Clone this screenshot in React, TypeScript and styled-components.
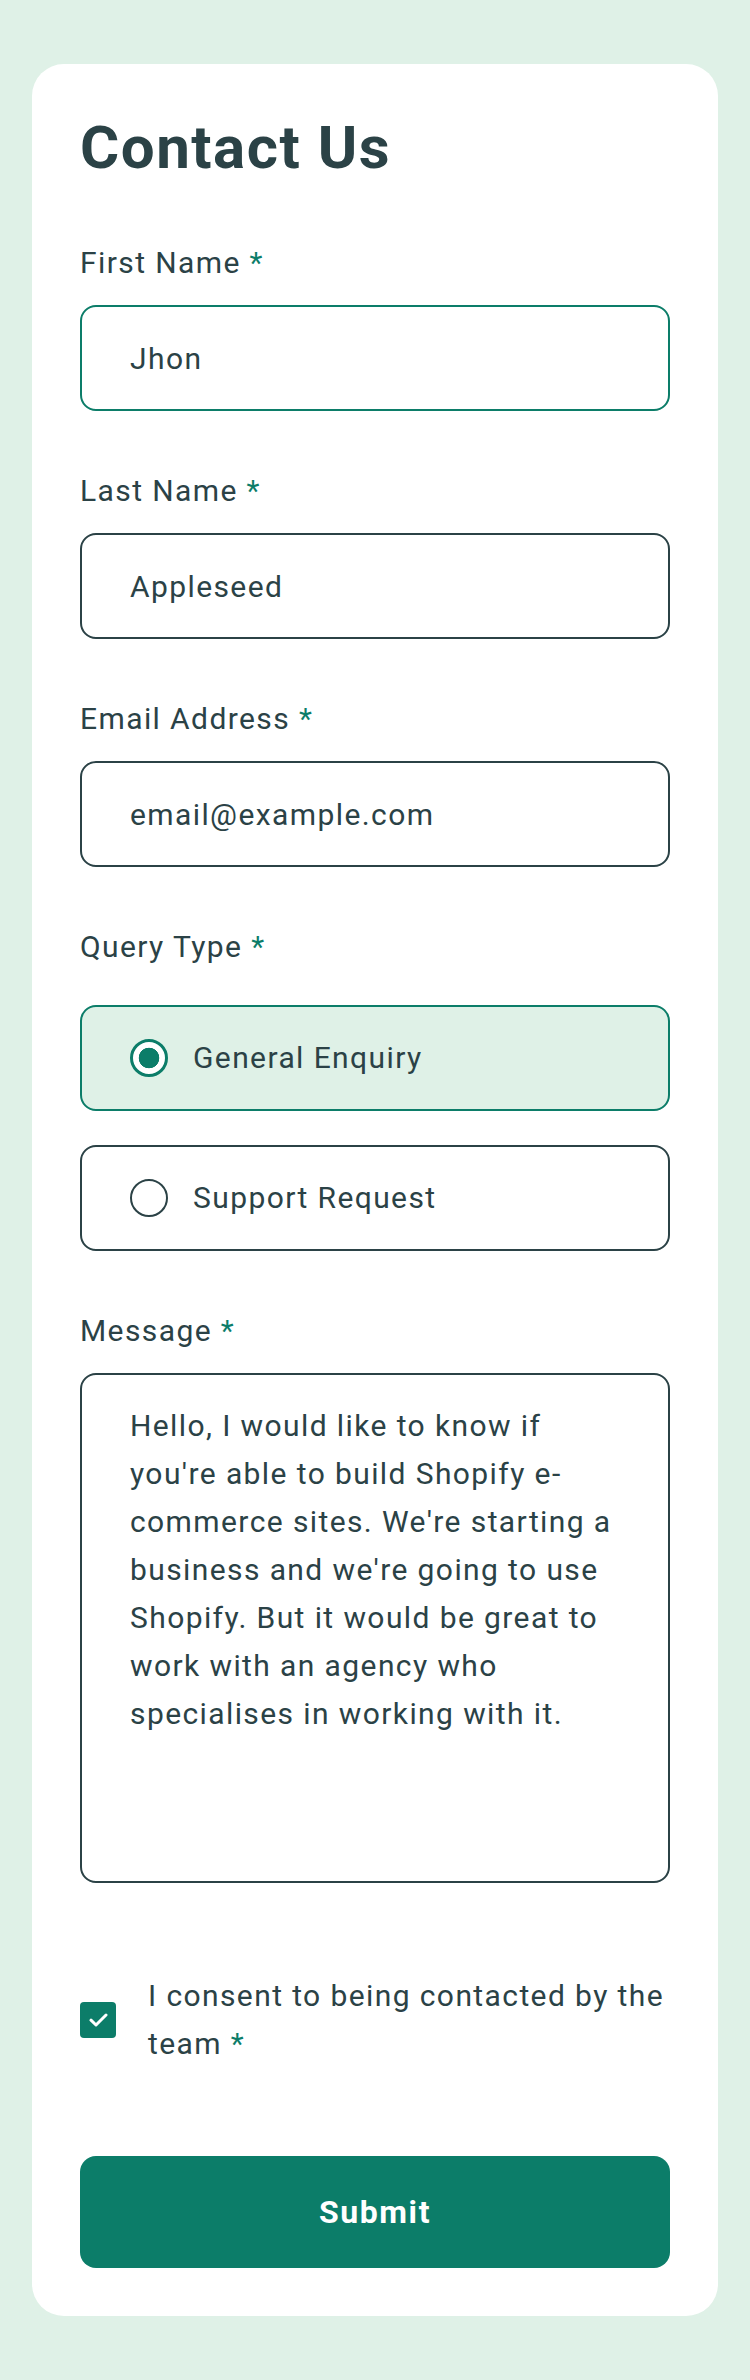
import React from "react";
import styled, { createGlobalStyle } from "styled-components";

const GREEN = "#0C7D69";
const GREEN_LIGHT = "#DFF1E7";
const DARK = "#2B4246";

const GlobalStyle = createGlobalStyle`
  *, *::before, *::after { box-sizing: border-box; }
  html, body { margin: 0; padding: 0; background: ${GREEN_LIGHT}; }
  body {
    font-family: Roboto, "Liberation Sans", Arial, sans-serif;
    color: ${DARK};
  }
`;

const Page = styled.main`
  padding: 64px 32px;
`;

const Card = styled.section`
  background: #fff;
  border-radius: 32px;
  padding: 48px;
`;

const Title = styled.h1`
  margin: 0 0 55px;
  font-size: 60px;
  line-height: 72px;
  font-weight: 700;
  letter-spacing: 1.5px;
  color: ${DARK};
`;

const Form = styled.form`
  display: flex;
  flex-direction: column;
  gap: 56px;
`;

const Field = styled.div<{ $gap?: number }>`
  display: flex;
  flex-direction: column;
  gap: ${(p) => p.$gap ?? 18}px;
`;

const Label = styled.label`
  font-size: 30px;
  line-height: 48px;
  letter-spacing: 1.4px;
  color: ${DARK};
`;

const Req = styled.span`
  color: ${GREEN};
`;

const TextInput = styled.input<{ $active?: boolean }>`
  display: block;
  width: 100%;
  height: 106px;
  margin: 0;
  padding: 0 48px;
  border: 2px solid ${(p) => (p.$active ? GREEN : DARK)};
  border-radius: 16px;
  background: #fff;
  font-family: inherit;
  font-size: 30px;
  line-height: 48px;
  letter-spacing: 1.4px;
  color: ${DARK};
  outline: none;
`;

const RadioOption = styled.label<{ $checked?: boolean }>`
  display: flex;
  align-items: center;
  gap: 25px;
  height: 106px;
  padding: 0 48px;
  border: 2px solid ${(p) => (p.$checked ? GREEN : DARK)};
  border-radius: 16px;
  background: ${(p) => (p.$checked ? GREEN_LIGHT : "#fff")};
  font-size: 30px;
  line-height: 48px;
  letter-spacing: 1.4px;
  color: ${DARK};
  cursor: pointer;
`;

const RadioInput = styled.input`
  appearance: none;
  -webkit-appearance: none;
  flex: none;
  margin: 0;
  width: 38px;
  height: 38px;
  border-radius: 50%;
  border: 2px solid ${DARK};
  background: #fff;
  &:checked {
    border: 3px solid ${GREEN};
    background: radial-gradient(circle closest-side, ${GREEN} 0 10px, #fff 10.6px);
  }
`;

const MessageArea = styled.textarea`
  display: block;
  width: 100%;
  height: 510px;
  margin: 0;
  padding: 27px 20px 27px 48px;
  border: 2px solid ${DARK};
  border-radius: 16px;
  background: #fff;
  font-family: inherit;
  font-size: 30px;
  line-height: 48px;
  letter-spacing: 1.4px;
  color: ${DARK};
  resize: none;
  overflow: hidden;
  outline: none;
`;

const Consent = styled.label`
  display: flex;
  align-items: center;
  gap: 32px;
  margin: 33px 0 32px;
  font-size: 30px;
  line-height: 48px;
  letter-spacing: 1.4px;
  color: ${DARK};
  cursor: pointer;
`;

const HiddenCheck = styled.input`
  position: absolute;
  opacity: 0;
  width: 1px;
  height: 1px;
  margin: 0;
`;

const CheckBox = styled.span`
  flex: none;
  display: flex;
  align-items: center;
  justify-content: center;
  width: 36px;
  height: 36px;
  border-radius: 4px;
  background: ${GREEN};
`;

const ConsentText = styled.span`
  flex: 1;
`;

const NoWrap = styled.span`
  white-space: nowrap;
`;

const Submit = styled.button`
  display: block;
  width: 100%;
  height: 112px;
  border: 0;
  border-radius: 16px;
  background: ${GREEN};
  color: #fff;
  font-family: inherit;
  font-size: 32px;
  font-weight: 700;
  letter-spacing: 1.6px;
  cursor: pointer;
`;

const message =
  "Hello, I would like to know if\nyou're able to build Shopify e-\ncommerce sites. We're starting a\nbusiness and we're going to use\nShopify. But it would be great to\nwork with an agency who\nspecialises in working with it.";

export default function App() {
  return (
    <>
      <GlobalStyle />
      <Page>
        <Card>
          <Title>Contact Us</Title>
          <Form onSubmit={(e) => e.preventDefault()}>
            <Field>
              <Label htmlFor="first">
                First Name<Req> *</Req>
              </Label>
              <TextInput id="first" defaultValue="Jhon" $active />
            </Field>
            <Field>
              <Label htmlFor="last">
                Last Name<Req> *</Req>
              </Label>
              <TextInput id="last" defaultValue="Appleseed" />
            </Field>
            <Field>
              <Label htmlFor="email">
                Email Address<Req> *</Req>
              </Label>
              <TextInput id="email" type="email" defaultValue="email@example.com" />
            </Field>
            <Field $gap={34} role="radiogroup" aria-labelledby="qt">
              <Label id="qt" as="span">
                Query Type<Req> *</Req>
              </Label>
              <RadioOption $checked>
                <RadioInput type="radio" name="query" defaultChecked />
                General Enquiry
              </RadioOption>
              <RadioOption>
                <RadioInput type="radio" name="query" />
                Support Request
              </RadioOption>
            </Field>
            <Field>
              <Label htmlFor="msg">
                Message<Req> *</Req>
              </Label>
              <MessageArea id="msg" defaultValue={message} />
            </Field>
            <Consent>
              <HiddenCheck type="checkbox" defaultChecked />
              <CheckBox>
                <svg width="19" height="14" viewBox="0 0 19 14" fill="none" aria-hidden="true">
                  <path
                    d="M2 7.2 L7 12 L17 2"
                    stroke="#fff"
                    strokeWidth="3"
                    strokeLinecap="round"
                    strokeLinejoin="round"
                  />
                </svg>
              </CheckBox>
              <ConsentText>
                I consent to being contacted by the{" "}
                <NoWrap>
                  team<Req> *</Req>
                </NoWrap>
              </ConsentText>
            </Consent>
            <Submit type="submit">Submit</Submit>
          </Form>
        </Card>
      </Page>
    </>
  );
}
